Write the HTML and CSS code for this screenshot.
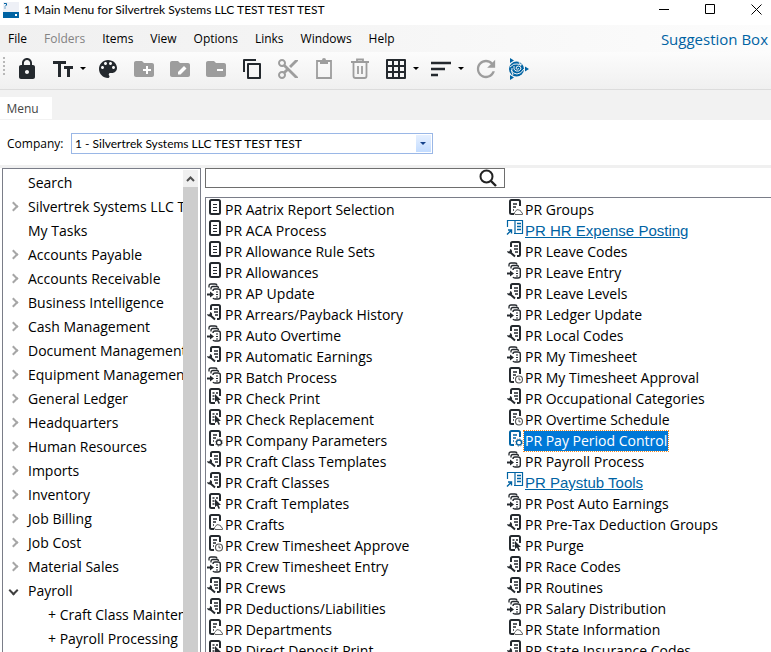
FILE: index.html
```html
<!DOCTYPE html>
<html lang="en">
<head>
  <meta charset="UTF-8" />
  <meta name="viewport" content="width=device-width, initial-scale=1.0"/>
  <title>1 Main Menu for Silvertrek Systems LLC TEST TEST TEST</title>
  <link rel="stylesheet" href="styles.css">
</head>
<body>
  <!-- Icon set for the program list -->
  <svg class="sprite" aria-hidden="true">
    <symbol id="i-doc" viewBox="0 0 18 18">
      <rect x="4" y="1" width="10" height="14" rx="1.5" fill="none" stroke="currentColor" stroke-width="2"/>
      <path d="M7 5.500h4M7 8.500h4M7 11.500h4" stroke="currentColor" stroke-width="1"/>
    </symbol>
    <symbol id="i-batch" viewBox="0 0 18 18">
      <path d="M3 4.500V3q0-2 2-2h4q2 0 2 1.500M5 6.500V5.500q0-2 2-2h4q1.500 0 1.500 1.500" fill="none" stroke="currentColor" stroke-width="1.300"/>
      <path d="M7 8q0-2 2-2h3q2.300 0 2.300 2v6q0 2-2.300 2H9q-1.500 0-2-1" fill="none" stroke="currentColor" stroke-width="1.400"/>
      <path d="M10 9h2M10 11.500h2M10 14h2" stroke="currentColor" stroke-width="1.200"/>
      <path d="M1 11.500h4" stroke="currentColor" stroke-width="2"/>
      <path d="M4 8.500l4 3-4 3z" fill="currentColor"/>
    </symbol>
    <symbol id="i-setup" viewBox="0 0 18 18">
      <path d="M5 6V2.500Q5 1 6.500 1h6Q14 1 14 2.500v11q0 1.500-1.500 1.500H11" fill="none" stroke="currentColor" stroke-width="2"/>
      <path d="M8 5h4M8 8h4M9 11h3" stroke="currentColor" stroke-width="1.400"/>
      <path d="M4.500 11.500l4.500 4" stroke="currentColor" stroke-width="2"/>
      <path d="M4 8q2.500.5 2 3-.5 1.500-2.500 1.500-2 0-2.500-2.500l2 .5.800-.8z" fill="currentColor"/>
    </symbol>
    <symbol id="i-report" viewBox="0 0 18 18">
      <path d="M9 15H5.500Q4 15 4 13.500v-11Q4 1 5.500 1h7Q14 1 14 2.500V8" fill="none" stroke="currentColor" stroke-width="2"/>
      <path d="M6.500 5h2M6.500 8h2M6.500 11h2M10 5h2" stroke="currentColor" stroke-width="1.400"/>
      <path d="M9 6v8l2-1.500 1.500 3.500 1.500-.7-1.500-3.300H15z" fill="currentColor"/>
    </symbol>
    <symbol id="i-base" viewBox="0 0 18 18">
      <path d="M8 15H5.500Q4 15 4 13.500v-11Q4 1 5.500 1h7Q14 1 14 2.500V7" fill="none" stroke="currentColor" stroke-width="2"/>
      <path d="M7 5h4M7 8h3M7 11h1" stroke="currentColor" stroke-width="1.400"/>
    </symbol>
    <symbol id="i-cloud" viewBox="0 0 18 18">
      <use href="#i-base"/>
      <path d="M9 15.500q-1.500-2 .5-3 1-3 3.500-1.500 2 0 2 2 2 .500 1.500 2.500z" fill="#fff" stroke="#666" stroke-width="1"/>
    </symbol>
    <symbol id="i-clock" viewBox="0 0 18 18">
      <use href="#i-base"/>
      <circle cx="13" cy="12.500" r="3.500" fill="#fff" stroke="#555" stroke-width="1.100"/>
      <path d="M13 10.500v2.300h1.700" fill="none" stroke="#555" stroke-width="1"/>
    </symbol>
    <symbol id="i-gear" viewBox="0 0 18 18">
      <use href="#i-base"/>
      <circle cx="13" cy="12.500" r="3.700" fill="#fff" stroke="#777" stroke-width="1" stroke-dasharray="1.200 1.700"/>
      <circle cx="13" cy="12.500" r="2.500" fill="#fff" stroke="currentColor" stroke-width="1.300"/>
    </symbol>
    <symbol id="i-book" viewBox="0 0 18 18">
      <path d="M1.500 7V.500h15v13H8M9 .500v13" fill="none" stroke="currentColor" stroke-width="1.200"/>
      <path d="M11 3.500h4M11 6.500h4M11 9.500h4" stroke="currentColor" stroke-width="1.300"/>
      <path d="M1 14.500l4-4M2 10h3.500v3.500" fill="none" stroke="currentColor" stroke-width="1.400"/>
    </symbol>
    <symbol id="i-folder" viewBox="0 0 24 24">
      <path d="M10 4H4c-1.100 0-2 .9-2 2v12c0 1.100.9 2 2 2h16c1.100 0 2-.9 2-2V8c0-1.100-.9-2-2-2h-8l-2-2z" fill="currentColor"/>
    </symbol>
  </svg>

  <div class="window">
    <header class="title-bar">
      <svg class="app-icon" width="16" height="16" viewBox="0 0 16 16">
        <path d="M0 0h16v10H0z" fill="#eef0f6"/>
        <path d="M0 10h16v6H0z" fill="#0063a3"/>
        <path d="M1 1.500h2.500v1.500L2 4.500M2 5.500v1" fill="none" stroke="#0063a3"/>
        <path d="M12 12h2v2h-2z" fill="#fff"/>
      </svg>
      <h1>1 Main Menu for Silvertrek Systems LLC TEST TEST TEST</h1>
      <div class="window-buttons">
        <button aria-label="Minimize"><svg width="11" height="11"><path d="M0 5.500h10" stroke="#000"/></svg></button>
        <button aria-label="Maximize"><svg width="11" height="11"><path d="M.5 .5h9v9h-9z" fill="none" stroke="#000"/></svg></button>
        <button aria-label="Close"><svg width="11" height="11"><path d="M.5 .5l10 10M10.500 .5l-10 10" stroke="#000"/></svg></button>
      </div>
    </header>

    <nav class="menu-bar">
      <button>File</button>
      <button disabled>Folders</button>
      <button>Items</button>
      <button>View</button>
      <button>Options</button>
      <button>Links</button>
      <button>Windows</button>
      <button>Help</button>
      <a class="suggestion" href="#">Suggestion Box</a>
    </nav>

    <div class="toolbar">
      <span class="grip"></span>
      <button aria-label="Lock"><svg viewBox="0 0 24 24"><path fill="currentColor" d="M18 8h-1V6c0-2.760-2.240-5-5-5S7 3.240 7 6v2H6c-1.100 0-2 .9-2 2v10c0 1.100.9 2 2 2h12c1.100 0 2-.9 2-2V10c0-1.100-.9-2-2-2zm-6 9c-1.100 0-2-.9-2-2s.9-2 2-2 2 .9 2 2-.9 2-2 2zm3.100-9H8.900V6c0-1.710 1.390-3.100 3.100-3.100s3.100 1.390 3.100 3.100v2z"/></svg></button>
      <button class="drop" aria-label="Text size"><svg viewBox="0 0 24 24"><path d="M2 5.500h13M8.500 5v15M13 10.500h9M17.500 10v10" stroke="currentColor" stroke-width="3"/></svg></button>
      <button aria-label="Colors"><svg viewBox="0 0 24 24"><path fill="currentColor" d="M12 3c-4.970 0-9 4.030-9 9s4.030 9 9 9c.83 0 1.500-.67 1.500-1.500 0-.39-.15-.74-.39-1.010-.23-.26-.38-.61-.38-.99 0-.83.67-1.500 1.500-1.500H16c2.760 0 5-2.240 5-5 0-4.420-4.030-8-9-8zm-5.500 9c-.83 0-1.500-.67-1.500-1.500S5.670 9 6.500 9 8 9.670 8 10.500 7.330 12 6.500 12zm3-4C8.670 8 8 7.330 8 6.500S8.670 5 9.500 5s1.500.67 1.500 1.500S10.330 8 9.500 8zm5 0c-.83 0-1.500-.67-1.500-1.500S13.670 5 14.500 5s1.500.67 1.500 1.500S15.330 8 14.500 8zm3 4c-.83 0-1.500-.67-1.500-1.500S16.670 9 17.500 9s1.500.67 1.500 1.500-.67 1.500-1.500 1.500z"/></svg></button>
      <button disabled aria-label="Add folder"><svg viewBox="0 0 24 24"><use href="#i-folder"/><path d="M11 13h8M15 9v8" stroke="#fff" stroke-width="2"/></svg></button>
      <button disabled aria-label="Rename folder"><svg viewBox="0 0 24 24"><use href="#i-folder"/><path d="M10 17.500v-2.500l6-6 2.500 2.500-6 6z" fill="#fff"/></svg></button>
      <button disabled aria-label="Remove folder"><svg viewBox="0 0 24 24"><use href="#i-folder"/><path d="M13 13h6" stroke="#fff" stroke-width="2"/></svg></button>
      <button aria-label="Copy"><svg viewBox="0 0 24 24"><path d="M4 15V3h12M8 7h12v14H8z" fill="none" stroke="currentColor" stroke-width="2" stroke-linejoin="round"/></svg></button>
      <button disabled aria-label="Cut"><svg viewBox="0 0 24 24"><path fill="currentColor" d="M9.640 7.640c.23-.5.36-1.050.36-1.640 0-2.210-1.790-4-4-4S2 3.790 2 6s1.790 4 4 4c.59 0 1.140-.13 1.640-.36L10 12l-2.360 2.360C7.140 14.130 6.590 14 6 14c-2.210 0-4 1.790-4 4s1.790 4 4 4 4-1.790 4-4c0-.59-.13-1.140-.36-1.640L12 14l7 7h3v-1L9.640 7.640zM6 8c-1.100 0-2-.89-2-2s.9-2 2-2 2 .89 2 2-.9 2-2 2zm0 12c-1.100 0-2-.89-2-2s.9-2 2-2 2 .89 2 2-.9 2-2 2zM19 3l-6 6 2 2 7-7V3z"/></svg></button>
      <button disabled aria-label="Paste"><svg viewBox="0 0 24 24"><path d="M5 4h14v17H5z" fill="none" stroke="currentColor" stroke-width="1.800"/><path d="M8 3h2q0-2 2-2t2 2h2v4H8z" fill="currentColor"/></svg></button>
      <button disabled aria-label="Delete"><svg viewBox="0 0 24 24"><path d="M3 5h18M9 5V2.500h6V5M5.500 5v14q0 2 2 2h9q2 0 2-2V5M10 9v8M14 9v8" fill="none" stroke="currentColor" stroke-width="1.800"/></svg></button>
      <button class="drop" aria-label="Grid view"><svg viewBox="0 0 24 24"><path d="M3 3h18v18H3zM9 3v18M15 3v18M3 9h18M3 15h18" fill="none" stroke="currentColor" stroke-width="2" stroke-linejoin="round"/></svg></button>
      <button class="drop" aria-label="Sort"><svg viewBox="0 0 24 24"><path d="M2 6h20M2 12h14M2 18h7" stroke="currentColor" stroke-width="2.400"/></svg></button>
      <button disabled aria-label="Refresh"><svg viewBox="1.500 1.500 21 21"><path fill="currentColor" d="M17.650 6.350C16.200 4.900 14.210 4 12 4c-4.420 0-7.990 3.580-7.990 8s3.570 8 7.990 8c3.730 0 6.840-2.550 7.730-6h-2.080c-.82 2.330-3.040 4-5.650 4-3.310 0-6-2.690-6-6s2.690-6 6-6c1.660 0 3.140.69 4.220 1.780L13 11h7V4l-2.350 2.350z"/></svg></button>
      <button class="brand" aria-label="Launch"><svg viewBox="0 0 24 24">
        <path fill="currentColor" d="M3 1l4 2.500L3 6zM22 12l-4 2.500v-5zM3 23v-5l4 2.500z"/>
        <circle cx="9.500" cy="12" r="7.500" fill="currentColor"/>
        <path d="M3 10q4-4 7-3t5 0M4 13q2 4 6 4t7-5M7 9q-1 4 2 5t5-2q0-3-2.500-3T9 11.500q1 1.500 3 0M6 18q-2-3-1-7M12 5l2 4" fill="none" stroke="#f4f4f4" stroke-width="1"/>
      </svg></button>
    </div>

    <div class="tabs"><button>Menu</button></div>

    <div class="company">
      <label for="company">Company:</label>
      <div class="combo">
        <select id="company">
          <option>1 - Silvertrek Systems LLC TEST TEST TEST</option>
        </select>
      </div>
    </div>

    <main class="content">
      <aside class="tree">
        <ul>
          <li>Search</li>
          <li class="closed">Silvertrek Systems LLC TEST</li>
          <li>My Tasks</li>
          <li class="closed">Accounts Payable</li>
          <li class="closed">Accounts Receivable</li>
          <li class="closed">Business Intelligence</li>
          <li class="closed">Cash Management</li>
          <li class="closed">Document Management</li>
          <li class="closed">Equipment Management</li>
          <li class="closed">General Ledger</li>
          <li class="closed">Headquarters</li>
          <li class="closed">Human Resources</li>
          <li class="closed">Imports</li>
          <li class="closed">Inventory</li>
          <li class="closed">Job Billing</li>
          <li class="closed">Job Cost</li>
          <li class="closed">Material Sales</li>
          <li class="open">Payroll</li>
          <li class="sub">+ Craft Class Maintenance</li>
          <li class="sub">+ Payroll Processing</li>
        </ul>
        <div class="scrollbar">
          <button aria-label="Scroll up"><svg width="9" height="6"><path d="M1 5l3.500-3.500L8 5" fill="none" stroke="#505050" stroke-width="2"/></svg></button>
        </div>
      </aside>

      <section class="programs">
        <div class="search">
          <input type="text" aria-label="Search programs">
          <button aria-label="Search"><svg width="18" height="18" viewBox="0 0 18 18"><circle cx="7.500" cy="7.500" r="6" fill="none" stroke="#222" stroke-width="2"/><path d="M12 12l5 5" stroke="#222" stroke-width="2.400"/></svg></button>
        </div>

        <div class="results">
          <ul>
            <li><svg><use href="#i-doc"/></svg><span>PR Aatrix Report Selection</span></li>
            <li><svg><use href="#i-doc"/></svg><span>PR ACA Process</span></li>
            <li><svg><use href="#i-doc"/></svg><span>PR Allowance Rule Sets</span></li>
            <li><svg><use href="#i-doc"/></svg><span>PR Allowances</span></li>
            <li><svg><use href="#i-batch"/></svg><span>PR AP Update</span></li>
            <li><svg><use href="#i-setup"/></svg><span>PR Arrears/Payback History</span></li>
            <li><svg><use href="#i-batch"/></svg><span>PR Auto Overtime</span></li>
            <li><svg><use href="#i-setup"/></svg><span>PR Automatic Earnings</span></li>
            <li><svg><use href="#i-batch"/></svg><span>PR Batch Process</span></li>
            <li><svg><use href="#i-report"/></svg><span>PR Check Print</span></li>
            <li><svg><use href="#i-report"/></svg><span>PR Check Replacement</span></li>
            <li><svg><use href="#i-gear"/></svg><span>PR Company Parameters</span></li>
            <li><svg><use href="#i-setup"/></svg><span>PR Craft Class Templates</span></li>
            <li><svg><use href="#i-setup"/></svg><span>PR Craft Classes</span></li>
            <li><svg><use href="#i-report"/></svg><span>PR Craft Templates</span></li>
            <li><svg><use href="#i-cloud"/></svg><span>PR Crafts</span></li>
            <li><svg><use href="#i-clock"/></svg><span>PR Crew Timesheet Approve</span></li>
            <li><svg><use href="#i-batch"/></svg><span>PR Crew Timesheet Entry</span></li>
            <li><svg><use href="#i-setup"/></svg><span>PR Crews</span></li>
            <li><svg><use href="#i-setup"/></svg><span>PR Deductions/Liabilities</span></li>
            <li><svg><use href="#i-cloud"/></svg><span>PR Departments</span></li>
            <li><svg><use href="#i-report"/></svg><span>PR Direct Deposit Print</span></li>
          </ul>
          <ul>
            <li><svg><use href="#i-cloud"/></svg><span>PR Groups</span></li>
            <li class="linked"><svg><use href="#i-book"/></svg><a href="#">PR HR Expense Posting</a></li>
            <li><svg><use href="#i-setup"/></svg><span>PR Leave Codes</span></li>
            <li><svg><use href="#i-batch"/></svg><span>PR Leave Entry</span></li>
            <li><svg><use href="#i-setup"/></svg><span>PR Leave Levels</span></li>
            <li><svg><use href="#i-batch"/></svg><span>PR Ledger Update</span></li>
            <li><svg><use href="#i-setup"/></svg><span>PR Local Codes</span></li>
            <li><svg><use href="#i-batch"/></svg><span>PR My Timesheet</span></li>
            <li><svg><use href="#i-clock"/></svg><span>PR My Timesheet Approval</span></li>
            <li><svg><use href="#i-setup"/></svg><span>PR Occupational Categories</span></li>
            <li><svg><use href="#i-clock"/></svg><span>PR Overtime Schedule</span></li>
            <li class="selected"><svg><use href="#i-gear"/></svg><span>PR Pay Period Control</span></li>
            <li><svg><use href="#i-batch"/></svg><span>PR Payroll Process</span></li>
            <li class="linked"><svg><use href="#i-book"/></svg><a href="#">PR Paystub Tools</a></li>
            <li><svg><use href="#i-batch"/></svg><span>PR Post Auto Earnings</span></li>
            <li><svg><use href="#i-setup"/></svg><span>PR Pre-Tax Deduction Groups</span></li>
            <li><svg><use href="#i-report"/></svg><span>PR Purge</span></li>
            <li><svg><use href="#i-setup"/></svg><span>PR Race Codes</span></li>
            <li><svg><use href="#i-setup"/></svg><span>PR Routines</span></li>
            <li><svg><use href="#i-batch"/></svg><span>PR Salary Distribution</span></li>
            <li><svg><use href="#i-cloud"/></svg><span>PR State Information</span></li>
            <li><svg><use href="#i-setup"/></svg><span>PR State Insurance Codes</span></li>
          </ul>
        </div>
      </section>
    </main>
  </div>
</body>
</html>
```
FILE: styles.css
```css
*,
*::before,
*::after {
  box-sizing: border-box;
}

body {
  margin: 0;
  font-family: "Open Sans", "Noto Sans", sans-serif;
  font-size: 12px;
  color: #000;
  background: #fff;
}

button,
input,
select {
  font: inherit;
  color: inherit;
  border: none;
  background: none;
  padding: 0;
  margin: 0;
}

ul {
  list-style: none;
  margin: 0;
  padding: 0;
}

.sprite {
  position: absolute;
  width: 0;
  height: 0;
}

.window {
  display: flex;
  flex-direction: column;
  height: 100vh;
  overflow: hidden;
}

/* Title bar */
.title-bar {
  display: flex;
  align-items: center;
  flex: none;
  height: 25px;
  padding: 0 9px 6px 3px;
}

.title-bar h1 {
  margin: 0 0 0 5px;
  font-family: Lato, sans-serif;
  font-size: 12px;
  font-weight: normal;
  line-height: 18px;
  white-space: nowrap;
}

.app-icon {
  flex: none;
}

.window-buttons {
  display: flex;
  gap: 35px;
  margin-left: auto;
}

.window-buttons button {
  display: flex;
}

/* Menu bar */
.menu-bar {
  display: flex;
  align-items: center;
  flex: none;
  gap: 17px;
  height: 27px;
  padding: 0 3px 0 8px;
  background: linear-gradient(to right, #f0f0f0, #fcfcfc);
}

.menu-bar button:disabled {
  color: #838383;
}

.suggestion {
  margin-left: auto;
  font-size: 15px;
  color: #0063a3;
  text-decoration: none;
  white-space: nowrap;
}

/* Toolbar */
.toolbar {
  display: flex;
  align-items: center;
  flex: none;
  height: 38px;
  padding-bottom: 4px;
  border-bottom: 1px solid #dcdcdc;
  background: linear-gradient(#fcfcfc, #f0f0f0);
}

.grip {
  width: 2px;
  height: 20px;
  margin: 0 4px 4px 3px;
  background: repeating-linear-gradient(#b8b8b8 0 2px, transparent 2px 4px);
}

.toolbar button {
  display: flex;
  align-items: center;
  justify-content: center;
  width: 36px;
  color: #24292e;
}

.toolbar svg {
  flex: none;
  width: 24px;
  height: 24px;
}

.toolbar button:disabled {
  color: #9d9d9d;
}

.toolbar .drop {
  justify-content: flex-start;
  gap: 5px;
  width: 45px;
  padding-left: 6px;
}

.drop::after {
  content: "";
  border: 3px solid transparent;
  border-top-color: #000;
  border-bottom: none;
}

.toolbar .brand {
  width: 30px;
  color: #0063a3;
}

/* Tabs */
.tabs {
  display: flex;
  flex: none;
  height: 30px;
  padding: 7px 0 1px;
  background: #f2f2f2;
}

.tabs button {
  width: 52px;
  padding-right: 7px;
  background: #fff;
  color: #444;
}

/* Company picker */
.company {
  display: flex;
  align-items: center;
  flex: none;
  height: 45px;
  padding: 2px 7px 0;
}

.company label {
  width: 64px;
}

.combo {
  position: relative;
  width: 362px;
}

.combo select {
  display: block;
  width: 100%;
  height: 21px;
  padding: 0 20px 0 3px;
  border: 1px solid #9ab7e6;
  font-family: Lato, sans-serif;
  appearance: none;
}

.combo::before {
  content: "";
  position: absolute;
  top: 2px;
  right: 2px;
  width: 15px;
  height: 17px;
  background: linear-gradient(#e6f0ff, #c3dcff);
  pointer-events: none;
}

.combo::after {
  content: "";
  position: absolute;
  top: 9px;
  right: 7px;
  border: 3px solid transparent;
  border-top-color: #15428b;
  border-bottom: none;
  pointer-events: none;
}

/* Tree and program list */
.content {
  display: flex;
  flex: 1;
  gap: 4px;
  min-height: 0;
  padding-left: 2px;
  border-top: 3px solid #f0f0f0;
}

.tree {
  display: flex;
  flex: none;
  width: 199px;
  padding: 1px 2px 0 0;
  border: 1px solid #7a7d88;
  border-bottom: none;
  overflow: hidden;
}

.tree ul {
  flex: 1;
  min-width: 0;
}

.tree li {
  display: flex;
  align-items: center;
  height: 24px;
  padding-left: 25px;
  font-size: 14px;
  white-space: nowrap;
  overflow: hidden;
}

.tree .closed::before,
.tree .open::before {
  content: "";
  flex: none;
  width: 7px;
  height: 7px;
  margin: 0 11px 0 -18px;
  border: solid #a6a6a6;
  border-width: 2px 2px 0 0;
  transform: rotate(45deg);
}

.tree .open::before {
  border-color: #404040;
  transform: rotate(135deg);
}

.tree .sub {
  padding-left: 45px;
}

.scrollbar {
  flex: none;
  width: 15px;
  background: #cdcdcd;
}

.scrollbar button {
  display: flex;
  align-items: center;
  justify-content: center;
  width: 100%;
  height: 17px;
  background: #f0f0f0;
}

.programs {
  display: flex;
  flex-direction: column;
  flex: 1;
  min-width: 0;
}

.search {
  display: flex;
  align-items: center;
  flex: none;
  width: 300px;
  height: 20px;
  margin-bottom: 9px;
  padding-right: 7px;
  border: 1px solid #6e6e6e;
}

.search input {
  flex: 1;
  min-width: 0;
  height: 18px;
  padding: 0 4px;
  outline: none;
}

.search button {
  display: flex;
}

.results {
  display: flex;
  flex: 1;
  min-height: 0;
  padding-top: 1px;
  border: solid #7a7d88;
  border-width: 1px 0 0 1px;
  overflow: hidden;
}

.results ul {
  flex: none;
  width: 300px;
}

.results li {
  display: flex;
  align-items: center;
  height: 21px;
  font-size: 14px;
  white-space: nowrap;
}

.results svg {
  flex: none;
  align-self: flex-start;
  width: 18px;
  height: 18px;
  color: #24292e;
}

.results span,
.results a {
  padding: 0 1px;
  line-height: 20px;
}

.results a {
  padding: 0;
  margin-left: 1px;
  font-family: "Liberation Sans", Arial, sans-serif;
  font-size: 15px;
  color: #0063a3;
}

.results .linked svg,
.results .selected svg {
  color: #0063a3;
}

.results .selected span {
  background: #0078d7;
  color: #fff;
  outline: 1px dotted #f08a24;
}
```
